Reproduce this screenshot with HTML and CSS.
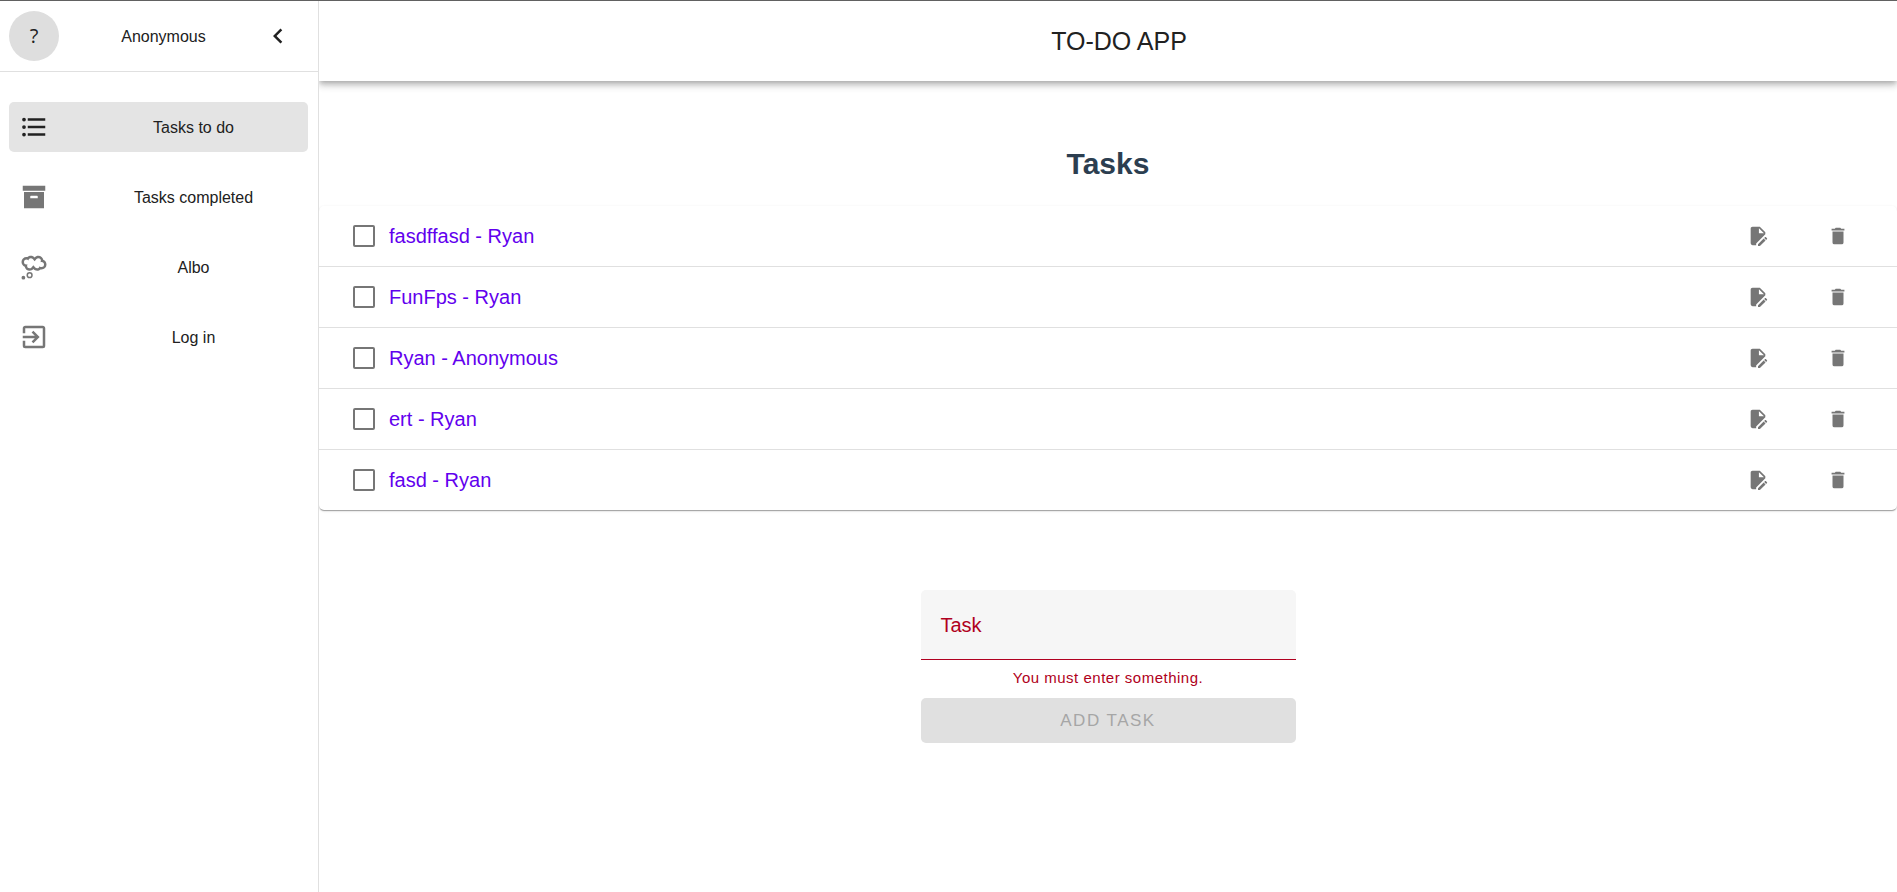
FILE: index.html
```html
<!DOCTYPE html>
<html lang="en">
<head>
<meta charset="utf-8">
<title>To-do app</title>
<link rel="stylesheet" href="styles.css">
</head>
<body>
<svg class="sprite" aria-hidden="true">
  <symbol id="i-list" viewBox="0 0 24 24"><path d="M7,5H21V7H7V5M7,13V11H21V13H7M4,4.5A1.5,1.5 0 0,1 5.5,6A1.5,1.5 0 0,1 4,7.5A1.5,1.5 0 0,1 2.5,6A1.5,1.5 0 0,1 4,4.5M4,10.5A1.5,1.5 0 0,1 5.5,12A1.5,1.5 0 0,1 4,13.5A1.5,1.5 0 0,1 2.5,12A1.5,1.5 0 0,1 4,10.5M7,19V17H21V19H7M4,16.5A1.5,1.5 0 0,1 5.5,18A1.5,1.5 0 0,1 4,19.5A1.5,1.5 0 0,1 2.5,18A1.5,1.5 0 0,1 4,16.5Z"/></symbol>
  <symbol id="i-archive" viewBox="0 0 24 24"><path d="M3,3H21V7H3V3M4,8H20V21H4V8M9.5,11A0.5,0.5 0 0,0 9,11.5V13H15V11.5A0.5,0.5 0 0,0 14.5,11H9.5Z"/></symbol>
  <symbol id="i-thought" viewBox="0 0 24 24"><path fill-rule="evenodd" d="M3.5,19A1.5,1.5 0 0,1 5,20.5A1.5,1.5 0 0,1 3.5,22A1.5,1.5 0 0,1 2,20.5A1.5,1.5 0 0,1 3.5,19M8.5,16A2.5,2.5 0 0,1 11,18.5A2.5,2.5 0 0,1 8.5,21A2.5,2.5 0 0,1 6,18.5A2.5,2.5 0 0,1 8.5,16M8.5,17.2A1.3,1.3 0 0,0 7.2,18.5A1.3,1.3 0 0,0 8.5,19.8A1.3,1.3 0 0,0 9.8,18.5A1.3,1.3 0 0,0 8.5,17.2M14.5,15C13.31,15 12.23,14.5 11.5,13.65C10.77,14.5 9.69,15 8.5,15C6.54,15 4.91,13.59 4.57,11.74C3.07,11.16 2,9.7 2,8A4,4 0 0,1 6,4C6.26,4 6.5,4.03 6.77,4.07C7.5,3.41 8.45,3 9.5,3C10.69,3 11.77,3.5 12.5,4.35C13.23,3.5 14.31,3 15.5,3C17.46,3 19.09,4.41 19.43,6.26C20.93,6.84 22,8.3 22,10A4,4 0 0,1 18,14C17.74,14 17.5,13.97 17.23,13.93C16.5,14.59 15.55,15 14.5,15M6,6A2,2 0 0,0 4,8A2,2 0 0,0 6,10C6.33,10 6.64,9.92 6.92,9.78C6.66,10.12 6.5,10.54 6.5,11A2,2 0 0,0 8.5,13C9.1,13 9.64,12.73 10,12.31L11.47,10.63L13,12.34C13.38,12.74 13.91,13 14.5,13C15.5,13 16.33,12.26 16.47,11.3C16.84,11.73 17.39,12 18,12A2,2 0 0,0 20,10A2,2 0 0,0 18,8C17.67,8 17.36,8.08 17.08,8.22C17.34,7.88 17.5,7.46 17.5,7A2,2 0 0,0 15.5,5C14.91,5 14.37,5.26 14,5.68L12.53,7.35L11,5.65C10.63,5.25 10.09,5 9.5,5C8.5,5 7.67,5.74 7.53,6.7C7.16,6.27 6.61,6 6,6Z"/></symbol>
  <symbol id="i-login" viewBox="0 0 24 24"><path d="M19,3H5C3.89,3 3,3.89 3,5V9H5V5H19V19H5V15H3V19A2,2 0 0,0 5,21H19A2,2 0 0,0 21,19V5C21,3.89 20.1,3 19,3M10.08,15.58L11.5,17L16.5,12L11.5,7L10.08,8.41L12.67,11H3V13H12.67L10.08,15.58Z"/></symbol>
  <symbol id="i-chevron" viewBox="0 0 24 24"><path d="M15.41,16.58L10.83,12L15.41,7.41L14,6L8,12L14,18L15.41,16.58Z"/></symbol>
  <symbol id="i-edit" viewBox="0 0 24 24"><path d="M6,2C4.89,2 4,2.89 4,4V20A2,2 0 0,0 6,22H10V20.09L20,10.09V8L14,2H6M13,3.5L18.5,9H13V3.5M20.15,13C20,13 19.86,13.05 19.75,13.16L18.73,14.18L20.82,16.26L21.84,15.25C22.05,15.03 22.05,14.67 21.84,14.46L20.54,13.16C20.43,13.05 20.29,13 20.15,13M18.14,14.77L12,20.92V23H14.08L20.23,16.85L18.14,14.77Z"/></symbol>
  <symbol id="i-delete" viewBox="0 0 24 24"><path d="M19,4H15.5L14.5,3H9.5L8.5,4H5V6H19M6,19A2,2 0 0,0 8,21H16A2,2 0 0,0 18,19V7H6V19Z"/></symbol>
</svg>
<div class="app">
  <aside class="sidebar">
    <div class="profile">
      <span class="avatar">?</span>
      <span class="profile-name">Anonymous</span>
      <button class="icon-btn collapse" type="button" aria-label="Collapse menu"><svg class="icon"><use href="#i-chevron"/></svg></button>
    </div>
    <nav class="nav">
      <a class="nav-item active" href="#todo"><svg class="icon"><use href="#i-list"/></svg><span class="nav-text">Tasks to do</span></a>
      <a class="nav-item" href="#completed"><svg class="icon"><use href="#i-archive"/></svg><span class="nav-text">Tasks completed</span></a>
      <a class="nav-item" href="#albo"><svg class="icon"><use href="#i-thought"/></svg><span class="nav-text">Albo</span></a>
      <a class="nav-item" href="#login"><svg class="icon"><use href="#i-login"/></svg><span class="nav-text">Log in</span></a>
    </nav>
  </aside>
  <div class="content">
    <header class="app-bar"><span class="app-title">TO-DO APP</span></header>
    <main class="main">
      <h1 class="heading">Tasks</h1>
      <ul class="tasks">
        <li class="task">
          <label class="task-label"><input class="check" type="checkbox"><span>fasdffasd - Ryan</span></label>
          <button class="icon-btn" type="button" aria-label="Edit"><svg class="icon small"><use href="#i-edit"/></svg></button>
          <button class="icon-btn" type="button" aria-label="Delete"><svg class="icon small"><use href="#i-delete"/></svg></button>
        </li>
        <li class="task">
          <label class="task-label"><input class="check" type="checkbox"><span>FunFps - Ryan</span></label>
          <button class="icon-btn" type="button" aria-label="Edit"><svg class="icon small"><use href="#i-edit"/></svg></button>
          <button class="icon-btn" type="button" aria-label="Delete"><svg class="icon small"><use href="#i-delete"/></svg></button>
        </li>
        <li class="task">
          <label class="task-label"><input class="check" type="checkbox"><span>Ryan - Anonymous</span></label>
          <button class="icon-btn" type="button" aria-label="Edit"><svg class="icon small"><use href="#i-edit"/></svg></button>
          <button class="icon-btn" type="button" aria-label="Delete"><svg class="icon small"><use href="#i-delete"/></svg></button>
        </li>
        <li class="task">
          <label class="task-label"><input class="check" type="checkbox"><span>ert - Ryan</span></label>
          <button class="icon-btn" type="button" aria-label="Edit"><svg class="icon small"><use href="#i-edit"/></svg></button>
          <button class="icon-btn" type="button" aria-label="Delete"><svg class="icon small"><use href="#i-delete"/></svg></button>
        </li>
        <li class="task">
          <label class="task-label"><input class="check" type="checkbox"><span>fasd - Ryan</span></label>
          <button class="icon-btn" type="button" aria-label="Edit"><svg class="icon small"><use href="#i-edit"/></svg></button>
          <button class="icon-btn" type="button" aria-label="Delete"><svg class="icon small"><use href="#i-delete"/></svg></button>
        </li>
      </ul>
      <form class="form">
        <div class="field">
          <input class="field-input" id="task" type="text" aria-invalid="true" aria-describedby="task-error">
          <label class="field-label" for="task">Task</label>
        </div>
        <p class="error" id="task-error">You must enter something.</p>
        <button class="submit" type="submit" disabled>ADD TASK</button>
      </form>
    </main>
  </div>
</div>
</body>
</html>
```

FILE: styles.css
```css
* {
  box-sizing: border-box;
}

body {
  margin: 0;
  background: #fff;
  color: #212121;
  font-family: "Liberation Sans", Arial, sans-serif;
  font-size: 16px;
}

.sprite {
  display: none;
}

.app {
  display: flex;
  min-height: 100vh;
  border-top: 1px solid #616161;
}

.icon {
  display: block;
  flex: none;
  width: 30px;
  height: 30px;
  fill: currentColor;
}

.icon.small {
  width: 22px;
  height: 22px;
}

.icon-btn {
  display: flex;
  align-items: center;
  justify-content: center;
  width: 40px;
  height: 40px;
  padding: 0;
  border: 0;
  background: none;
  color: #767676;
}

/* Sidebar */
.sidebar {
  flex: none;
  width: 319px;
  border-right: 1px solid #e0e0e0;
}

.profile {
  display: flex;
  align-items: center;
  height: 71px;
  padding: 0 20px 0 9px;
  border-bottom: 1px solid #e0e0e0;
}

.avatar {
  display: flex;
  align-items: center;
  justify-content: center;
  width: 50px;
  height: 50px;
  padding-bottom: 2px;
  border-radius: 50%;
  background: #dedede;
  font-family: "Open Sans", sans-serif;
  font-size: 20px;
}

.profile-name {
  flex: 1;
  padding: 2px 0 0 10px;
  text-align: center;
}

.collapse {
  color: #212121;
}

.nav {
  display: flex;
  flex-direction: column;
  gap: 20px;
  padding: 30px 10px 0 9px;
}

.nav-item {
  display: flex;
  align-items: center;
  height: 50px;
  padding: 0 10px;
  border-radius: 5px;
  color: #767676;
  text-decoration: none;
}

.nav-item.active {
  background: #e4e4e4;
  color: #212121;
}

.nav-text {
  flex: 1;
  padding: 2px 0 0 40px;
  color: #212121;
  text-align: center;
}

/* Content */
.content {
  flex: 1;
  min-width: 0;
}

.app-bar {
  display: flex;
  align-items: center;
  justify-content: center;
  height: 80px;
  padding-left: 22px;
  box-shadow: 0 2px 5px -1px rgba(0, 0, 0, .2), 0 5px 6px rgba(0, 0, 0, .14), 0 1px 12px rgba(0, 0, 0, .12);
  clip-path: inset(0 0 -20px 0);
}

.app-title {
  font-size: 25px;
}

.heading {
  margin: 66px 0 25px;
  color: #2c3e50;
  font-size: 30px;
  line-height: 34px;
  text-align: center;
}

.tasks {
  margin: 0;
  padding: 0;
  border-radius: 5px;
  box-shadow: 0 2px 1px -1px rgba(0, 0, 0, .2), 0 1px 1px rgba(0, 0, 0, .14), 0 1px 3px rgba(0, 0, 0, .12);
  clip-path: inset(-4px 0 -6px 0);
  list-style: none;
}

.task {
  display: flex;
  align-items: center;
  gap: 40px;
  height: 61px;
  padding: 0 39px 0 34px;
  border-bottom: 1px solid #e0e0e0;
}

.task:last-child {
  height: 60px;
  border-bottom: 0;
}

.task-label {
  display: flex;
  flex: 1;
  align-items: center;
  gap: 14px;
  color: #6200ee;
  font-size: 20px;
}

.check {
  appearance: none;
  width: 22px;
  height: 22px;
  margin: 0;
  border: 2px solid #767676;
  border-radius: 2px;
}

/* Form */
.form {
  width: 375px;
  margin: 80px auto 0;
}

.field {
  position: relative;
}

.field-input {
  display: block;
  width: 100%;
  height: 70px;
  padding: 25px 20px 5px;
  border: 0;
  border-bottom: 1px solid #b00020;
  border-radius: 5px 5px 0 0;
  background: #f6f6f6;
  font: inherit;
  font-size: 20px;
}

.field-label {
  position: absolute;
  top: 24px;
  left: 20px;
  color: #b00020;
  font-size: 20px;
}

.error {
  margin: 8px 0 10px;
  color: #b00020;
  font-size: 15px;
  line-height: 20px;
  letter-spacing: 0.5px;
  text-align: center;
}

.submit {
  display: block;
  width: 100%;
  height: 45px;
  border: 0;
  border-radius: 5px;
  background: #e0e0e0;
  color: #a6a6a6;
  font: inherit;
  font-size: 17px;
  letter-spacing: 1.5px;
}
```
